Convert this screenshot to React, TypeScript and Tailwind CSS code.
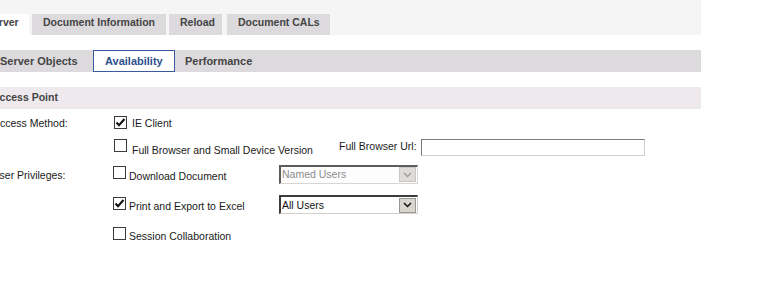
import React from 'react';

function CheckBox({ checked }: { checked?: boolean }) {
  return (
    <span className="relative inline-flex h-[13px] w-[13px] shrink-0 items-center justify-center border border-[#3a3a3a] bg-white">
      {checked && (
        <svg width="11" height="11" viewBox="0 0 11 11" className="block">
          <path d="M1.5 5.5 L4 8.2 L9.5 2" fill="none" stroke="#111" strokeWidth="2.1" />
        </svg>
      )}
    </span>
  );
}

function Select({ value, disabled }: { value: string; disabled?: boolean }) {
  return (
    <div
      className={`flex h-[19px] w-[139px] items-center border-t-2 border-l-2 border-r border-b ${
        disabled
          ? 'border-t-[#5c5c5c] border-l-[#5c5c5c] border-r-[#d8d6d2] border-b-[#d8d6d2] bg-[#fdfdfd]'
          : 'border-t-[#3c3c3c] border-l-[#3c3c3c] border-r-[#d4d0c8] border-b-[#d4d0c8] bg-white'
      }`}
    >
      <span className={`flex-1 pl-[1px] leading-[15px] ${disabled ? 'text-[#8c8c8c]' : 'text-[#111]'}`}>
        {value}
      </span>
      <span
        className={`mr-[1px] flex h-[15px] w-[17px] items-center justify-center border ${
          disabled ? 'border-[#c8c6c2] bg-[#dedcd8]' : 'border-[#9a9894] bg-[#d9d6d0]'
        }`}
      >
        <svg width="9" height="6" viewBox="0 0 9 6">
          <path
            d="M1 1 L4.5 4.5 L8 1"
            fill="none"
            stroke={disabled ? '#9c9c9c' : '#111'}
            strokeWidth="1.5"
          />
        </svg>
      </span>
    </div>
  );
}

const tabs = [
  { label: 'Server', w: 'w-[54px]', active: true },
  { label: 'Document Information', w: 'w-[134px]' },
  { label: 'Reload', w: 'w-[53px]' },
  { label: 'Document CALs', w: 'w-[103px]' },
];

export default function App() {
  return (
    <div className="h-[289px] w-[767px] overflow-hidden bg-white font-['Liberation_Sans',Arial,sans-serif] text-[10.5px]">
      <div className="w-[701px] overflow-hidden">
        {/* main tabs */}
        <div className="h-[35px] bg-[#f5f5f5] pt-[14px]">
          <div className="-ml-[25px] flex gap-[3px] font-bold text-[#444]">
            {tabs.map((t, i) => (
              <div
                key={t.label}
                className={`h-[21px] ${t.w} pl-[11px] pt-[2px] leading-[12px] ${
                  t.active ? 'bg-white' : 'bg-[#dcdadc]'
                } ${i === 3 ? 'ml-[2px]' : ''}`}
              >
                {t.label}
              </div>
            ))}
          </div>
        </div>

        {/* sub tabs */}
        <div className="mt-[15px] flex h-[22px] items-stretch bg-[#dcdadc] text-[11px] font-bold text-[#444]">
          <div className="-ml-[10px] flex w-[97px] items-center pl-[10px]">Server Objects</div>
          <div className="ml-[6px] flex w-[82px] items-center border border-[#3a5a9e] bg-white pl-[11px] text-[#2e4f8e]">
            Availability
          </div>
          <div className="flex items-center pl-[10px]">Performance</div>
        </div>

        {/* section header */}
        <div className="mt-[15px] flex h-[22px] items-center bg-[#eee9ed] font-bold text-[#444]">
          <span className="-ml-[8px]">Access Point</span>
        </div>
      </div>

      {/* form */}
      <div className="text-[#1a1a1a]">
        <div className="flex h-[28px] items-center pt-[2px]">
          <span className="-ml-[7px] w-[120px] shrink-0">Access Method:</span>
          <span className="ml-[1px]">
            <CheckBox checked />
          </span>
          <span className="ml-[5px]">IE Client</span>
        </div>

        <div className="flex h-[24px] items-center">
          <span className="-ml-[7px] w-[120px] shrink-0" />
          <div className="flex w-[226px] shrink-0 items-center">
            <span className="ml-[1px] mt-[-2px]">
              <CheckBox />
            </span>
            <span className="ml-[5px] mt-[3px]">Full Browser and Small Device Version</span>
          </div>
          <span className="w-[82px] shrink-0 mt-[-4px]">Full Browser Url:</span>
          <div className="mt-[-4px] h-[17px] w-[224px] border-t border-l border-t-[#7a7a7a] border-l-[#7a7a7a] border-r border-b border-r-[#d4d0c8] border-b-[#d4d0c8] bg-white" />
        </div>

        <div className="flex h-[29px] items-center">
          <span className="-ml-[8px] w-[121px] shrink-0">User Privileges:</span>
          <div className="flex w-[166px] shrink-0 items-center">
            <span className="mt-[-1px]">
              <CheckBox />
            </span>
            <span className="ml-[3px] mt-[3px]">Download Document</span>
          </div>
          <div className="mt-[-3px]">
            <Select value="Named Users" disabled />
          </div>
        </div>

        <div className="flex h-[31px] items-center">
          <span className="-ml-[7px] w-[120px] shrink-0" />
          <div className="flex w-[166px] shrink-0 items-center">
            <span className="mt-[-1px]">
              <CheckBox checked />
            </span>
            <span className="ml-[3px] mt-[2px]">Print and Export to Excel</span>
          </div>
          <div className="mt-[-2px]">
            <Select value="All Users" />
          </div>
        </div>

        <div className="flex h-[30px] items-center">
          <span className="-ml-[7px] w-[120px] shrink-0" />
          <div className="flex w-[166px] shrink-0 items-center">
            <span className="mt-[-1px]">
              <CheckBox />
            </span>
            <span className="ml-[3px] mt-[2px]">Session Collaboration</span>
          </div>
        </div>
      </div>
    </div>
  );
}
